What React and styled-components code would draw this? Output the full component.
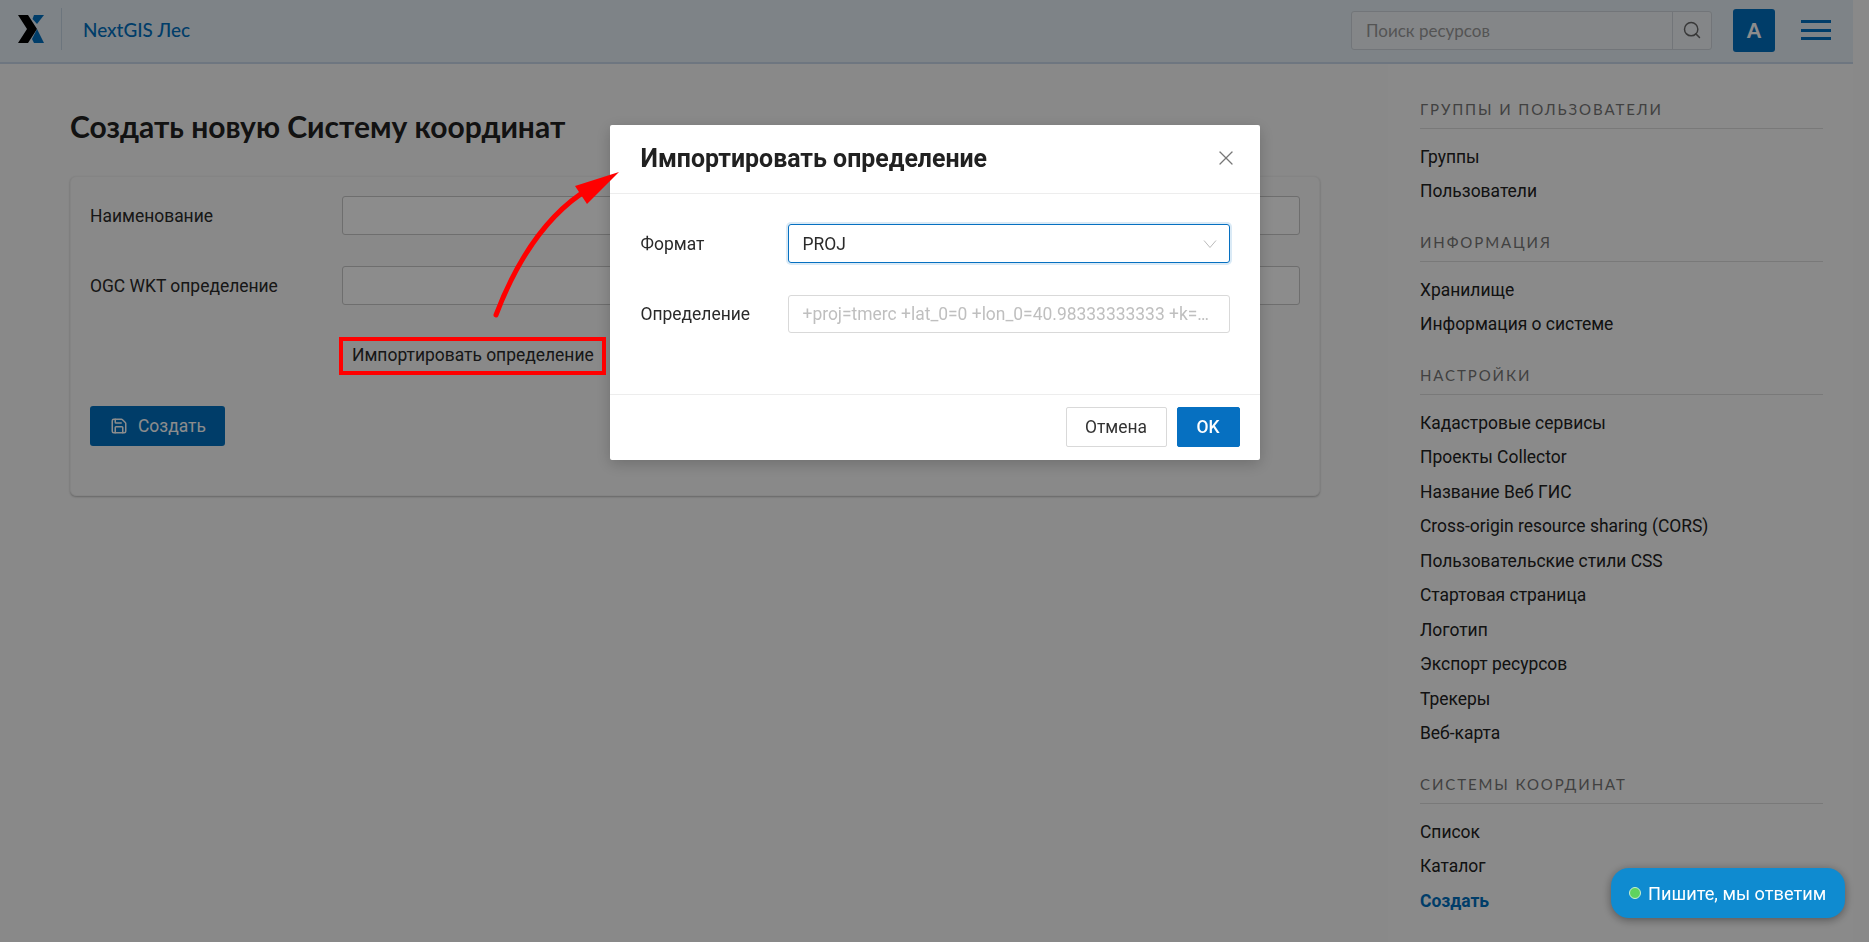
import React from "react";
import styled, { createGlobalStyle } from "styled-components";
import { Search, Save, X } from "lucide-react";

const blue = "#0070c0";

const menu = [
    { title: "Группы и пользователи", items: ["Группы", "Пользователи"] },
    { title: "Информация", items: ["Хранилище", "Информация о системе"] },
    {
        title: "Настройки",
        items: [
            "Кадастровые сервисы",
            "Проекты Collector",
            "Название Веб ГИС",
            "Cross-origin resource sharing (CORS)",
            "Пользовательские стили CSS",
            "Стартовая страница",
            "Логотип",
            "Экспорт ресурсов",
            "Трекеры",
            "Веб-карта"
        ]
    },
    { title: "Системы координат", items: ["Список", "Каталог", "Создать"] }
];

const GlobalStyle = createGlobalStyle`
    html, body {
        margin: 0;
        height: 100%;
        overflow: hidden;
        background: #f9f9f9;
    }
    * {
        box-sizing: border-box;
    }
    body {
        font-family: Roboto, "Liberation Sans", sans-serif;
        font-size: 17.45px;
        color: #2a2a2a;
    }
`;

const Page = styled.div`
    height: 942px;
    width: 1853px;
    display: flex;
    flex-direction: column;
    overflow: hidden;
`;

const Header = styled.header`
    height: 64px;
    flex: none;
    display: flex;
    align-items: center;
    padding: 0 22px 4px 18px;
    background: #e5eef6;
    border-bottom: 2px solid #c9d8ea;
`;

const LogoBox = styled.div`
    display: flex;
    align-items: center;
    height: 42px;
    padding-right: 15px;
    border-right: 1px solid #c5d5e3;
`;

const Brand = styled.a`
    margin-left: 21px;
    font-family: Lato, "Noto Sans", sans-serif;
    font-size: 18.9px;
    font-weight: 500;
    color: ${blue};
`;

const SearchBox = styled.div`
    margin-left: auto;
    width: 361px;
    height: 39px;
    margin-top: 2px;
    display: flex;
    background: #f0f4f8;
    border: 1px solid #cfd6dc;
    border-radius: 3px;
`;

const SearchInput = styled.input`
    flex: 1;
    min-width: 0;
    border: 0;
    padding: 0 14px;
    background: transparent;
    font-family: Lato, "Noto Sans", sans-serif;
    font-size: 17px;
    &::placeholder {
        color: #9a9a9a;
        opacity: 1;
    }
`;

const SearchButton = styled.div`
    width: 39px;
    display: flex;
    align-items: center;
    justify-content: center;
    color: #666;
    border-left: 1px solid #cfd6dc;
`;

const Avatar = styled.div`
    width: 42px;
    height: 43px;
    margin-left: 21px;
    margin-top: 2px;
    display: flex;
    align-items: center;
    justify-content: center;
    background: ${blue};
    border-radius: 3px;
    color: #fff;
    font-family: Lato, "Noto Sans", sans-serif;
    font-size: 20px;
    font-weight: 900;
`;

const Burger = styled.div`
    width: 30px;
    height: 20px;
    margin-left: 26px;
    margin-top: 2px;
    display: flex;
    flex-direction: column;
    justify-content: space-between;
    span {
        height: 3px;
        background: ${blue};
    }
`;

const Body = styled.div`
    flex: 1;
    display: flex;
    min-height: 0;
`;

const Main = styled.main`
    width: 1388px;
    flex: none;
    padding: 44px 68px 0 70px;
`;

const Title = styled.h1`
    margin: 0 0 32px;
    height: 36px;
    line-height: 36px;
    font-family: Lato, "Noto Sans", sans-serif;
    font-size: 30px;
    font-weight: 700;
    color: #212121;
`;

const Card = styled.div`
    padding: 19px 19px 49px;
    background: #f9f9f9;
    border: 1px solid #f0f0f0;
    border-radius: 6px;
    box-shadow: 0 1px 2px rgba(0, 0, 0, 0.25);
`;

const FormGrid = styled.div`
    display: grid;
    grid-template-columns: 252px 1fr;
    row-gap: 31px;
    align-items: center;
`;

const FieldLabel = styled.div`
    padding-top: 1px;
`;

const FieldInput = styled.div`
    height: 39px;
    background: #fff;
    border: 1px solid #c8c8c8;
    border-radius: 3px;
`;

const ImportButton = styled.div`
    grid-column: 2;
    height: 38px;
    padding-left: 10px;
    display: flex;
    align-items: center;
`;

const CreateButton = styled.div`
    width: 135px;
    height: 40px;
    margin-top: 32px;
    padding-left: 20px;
    display: flex;
    align-items: center;
    gap: 10px;
    background: ${blue};
    border-radius: 3px;
    color: #fff;
`;

const Sidebar = styled.aside`
    flex: 1;
    padding: 35px 30px 0 32px;
    background: #fcfcfc;
`;

const SectionTitle = styled.div`
    height: 30px;
    padding-bottom: 9px;
    line-height: 20px;
    border-bottom: 1px solid #dcdcdc;
    font-family: Lato, "Noto Sans", sans-serif;
    font-size: 15px;
    letter-spacing: 1.9px;
    text-transform: uppercase;
    color: #777;
`;

const SectionList = styled.ul`
    list-style: none;
    margin: 10.5px 0 23.5px;
    padding: 0;
`;

const SectionItem = styled.li`
    height: 34.5px;
    line-height: 34px;
    white-space: nowrap;
    color: ${props => (props.$active ? blue : "#212121")};
    font-weight: ${props => (props.$active ? 700 : 400)};
`;

const Overlay = styled.div`
    position: fixed;
    inset: 0;
    padding-top: 125px;
    display: flex;
    justify-content: center;
    align-items: flex-start;
    background: rgba(0, 0, 0, 0.45);
`;

const Modal = styled.div`
    width: 650px;
    height: 335px;
    display: flex;
    flex-direction: column;
    background: #fff;
    border-radius: 2px;
    box-shadow: 0 4px 16px rgba(0, 0, 0, 0.2);
`;

const ModalHead = styled.div`
    height: 69px;
    flex: none;
    padding: 0 22px 2px 31px;
    display: flex;
    align-items: center;
    justify-content: space-between;
    border-bottom: 1px solid #ededed;
    color: #777;
`;

const ModalTitle = styled.div`
    font-size: 24.9px;
    font-weight: 700;
    color: #212121;
`;

const ModalBody = styled.div`
    flex: 1;
    padding: 30px 30px 0 31px;
    display: grid;
    grid-template-columns: 147px 442px;
    grid-auto-rows: 39px;
    row-gap: 31px;
    align-items: center;
`;

const Select = styled.div`
    height: 39px;
    padding: 0 12px 0 14px;
    display: flex;
    align-items: center;
    justify-content: space-between;
    border: 1px solid #0670c1;
    border-radius: 3px;
    box-shadow: 0 0 0 2px rgba(6, 112, 193, 0.15);
`;

const DefInput = styled.input`
    width: 100%;
    height: 38px;
    padding: 0 14px;
    border: 1px solid #d9d9d9;
    border-radius: 3px;
    font-family: inherit;
    font-size: 17.45px;
    text-overflow: ellipsis;
    &::placeholder {
        color: #bfbfbf;
        opacity: 1;
    }
`;

const ModalFoot = styled.div`
    height: 66px;
    flex: none;
    padding: 12px 20px 0;
    display: flex;
    justify-content: flex-end;
    gap: 10px;
    border-top: 1px solid #ededed;
`;

const ModalButton = styled.div`
    width: ${props => (props.$primary ? "63px" : "101px")};
    height: 40px;
    display: flex;
    align-items: center;
    justify-content: center;
    border-radius: 2px;
    border: 1px solid ${props => (props.$primary ? "#0670c1" : "#d9d9d9")};
    background: ${props => (props.$primary ? "#0670c1" : "#fff")};
    color: ${props => (props.$primary ? "#fff" : "#333")};
    font-weight: ${props => (props.$primary ? 500 : 400)};
`;

const RedFrame = styled.div`
    position: fixed;
    left: 339px;
    top: 337px;
    width: 267px;
    height: 38px;
    border: 4px solid #f00;
`;

const Arrow = styled.svg`
    position: fixed;
    left: 0;
    top: 0;
    pointer-events: none;
`;

const Chat = styled.div`
    position: fixed;
    left: 1611px;
    top: 868px;
    width: 234px;
    height: 50px;
    padding-left: 18px;
    display: flex;
    align-items: center;
    gap: 7px;
    background: #0f8bd0;
    border-radius: 18px;
    box-shadow: 0 2px 10px rgba(0, 0, 0, 0.4);
    color: #fff;
    font-size: 18.2px;
    white-space: nowrap;
`;

const ChatDot = styled.span`
    width: 12px;
    height: 12px;
    border-radius: 50%;
    background: #5fd35f;
    border: 1px solid #c9efd0;
`;

const Logo = () => (
    <svg width="28" height="28" viewBox="0 0 28 28">
        <polygon points="0,0 10,0 19,14 10,28 0,28 9,14" fill="#000" />
        <polygon points="16,0 26,0 19,9 14.5,4" fill="#0070c0" />
        <polygon points="19,14 26,28 16,28 14,24" fill="#0070c0" />
    </svg>
);

const Chevron = () => (
    <svg width="14" height="10" viewBox="0 0 14 10" fill="none">
        <path d="M1 1.5 L7 8.5 L13 1.5" stroke="#bbb" strokeWidth="1" />
    </svg>
);

const App = () => (
    <>
        <GlobalStyle />
        <Page>
            <Header>
                <LogoBox>
                    <Logo />
                </LogoBox>
                <Brand>NextGIS Лес</Brand>
                <SearchBox>
                    <SearchInput placeholder="Поиск ресурсов" />
                    <SearchButton>
                        <Search size={20} strokeWidth={1.75} />
                    </SearchButton>
                </SearchBox>
                <Avatar>A</Avatar>
                <Burger>
                    <span />
                    <span />
                    <span />
                </Burger>
            </Header>
            <Body>
                <Main>
                    <Title>Создать новую Систему координат</Title>
                    <Card>
                        <FormGrid>
                            <FieldLabel>Наименование</FieldLabel>
                            <FieldInput />
                            <FieldLabel>OGC WKT определение</FieldLabel>
                            <FieldInput />
                            <ImportButton>Импортировать определение</ImportButton>
                        </FormGrid>
                        <CreateButton>
                            <Save size={18} strokeWidth={2} />
                            Создать
                        </CreateButton>
                    </Card>
                </Main>
                <Sidebar>
                    {menu.map(section => (
                        <div key={section.title}>
                            <SectionTitle>{section.title}</SectionTitle>
                            <SectionList>
                                {section.items.map(item => (
                                    <SectionItem key={item} $active={item === "Создать"}>
                                        {item}
                                    </SectionItem>
                                ))}
                            </SectionList>
                        </div>
                    ))}
                </Sidebar>
            </Body>
        </Page>
        <Overlay>
            <Modal>
                <ModalHead>
                    <ModalTitle>Импортировать определение</ModalTitle>
                    <X size={24} strokeWidth={1.25} />
                </ModalHead>
                <ModalBody>
                    <div>Формат</div>
                    <Select>
                        PROJ
                        <Chevron />
                    </Select>
                    <div>Определение</div>
                    <DefInput placeholder="+proj=tmerc +lat_0=0 +lon_0=40.98333333333 +k=1 +x_0=1300000 +y_0=-4511057.63 +ellps=krass" />
                </ModalBody>
                <ModalFoot>
                    <ModalButton>Отмена</ModalButton>
                    <ModalButton $primary>OK</ModalButton>
                </ModalFoot>
            </Modal>
        </Overlay>
        <RedFrame />
        <Arrow width="1869" height="942">
            <path d="M496 315 C515 265 545 215 590 188" fill="none" stroke="#f00" strokeWidth="5" strokeLinecap="round" />
            <polygon points="619,172 575,186 587,204" fill="#f00" />
        </Arrow>
        <Chat>
            <ChatDot />
            Пишите, мы ответим
        </Chat>
    </>
);

export default App;
